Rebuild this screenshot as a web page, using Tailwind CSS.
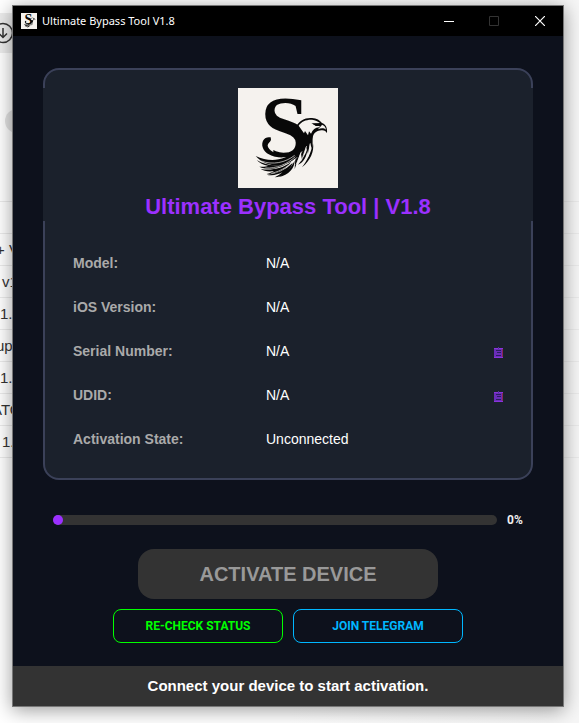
<!DOCTYPE html>
<html lang="en">
<head>
  <meta charset="UTF-8" />
  <meta name="viewport" content="width=device-width, initial-scale=1.0" />
  <title>Ultimate Bypass Tool V1.8</title>
  <script src="https://cdn.jsdelivr.net/npm/@tailwindcss/browser@4"></script>
</head>

<body class="relative min-h-screen overflow-hidden bg-[#fafafa] pt-[5px] pr-[15px] pb-4 pl-3 font-['Liberation_Sans',Arial,sans-serif]">

  <!-- LOGO -->
  <svg class="hidden">
    <symbol id="logo" viewBox="30 24 300 300">
      <rect x="30" y="24" width="300" height="300" fill="#f5f2ee" />
      <text x="97" y="228" font-family="Liberation Serif, serif" font-weight="700" font-size="262" fill="#080808">S</text>
      <!-- curled tail -->
      <path d="M90 166H136V245H90Z" fill="#f5f2ee" />
      <path d="M128 172C110 168 99 184 104 202C110 222 136 234 168 232C198 230 220 218 226 192L214 187C208 212 190 225 168 224C140 222 122 211 119 198C119 188 128 186 129 179Z" fill="#080808" />
      <g fill="#080808">
        <path d="M204 140C214 122 232 112 252 114C266 115 276 121 282 129C292 132 299 142 297 160C294 153 288 150 280 151C268 152 258 158 255 169C252 181 256 193 252 207L246 190L240 222L234 200L222 240L218 215L200 267L202 235C192 245 178 252 160 256C130 258 102 250 83 228C106 239 130 242 152 238C178 233 204 215 211 188C214 170 211 152 204 140Z" />
        <path d="M86 240C112 256 146 262 178 248C160 264 120 273 94 260C108 261 116 259 120 257C106 255 94 249 86 240Z" />
        <path d="M98 267C130 272 162 266 190 246C172 270 142 284 116 282C124 280 132 277 138 273C122 276 108 273 98 267Z" />
        <path d="M116 284C146 282 172 270 194 248C186 272 164 291 140 292C150 287 158 282 163 277C150 284 132 288 116 284Z" />
        <path d="M150 291C172 280 188 264 200 242C200 262 184 286 150 291Z" />
        <path d="M222 262C236 244 248 222 255 190C259 214 248 242 222 262Z" />
        <path d="M210 254C222 240 232 224 238 206C238 228 226 248 210 254Z" />
      </g>
      <path d="M212 137C220 124 236 118 252 119C262 120 270 124 276 129L262 130L253 131L264 138L276 138L273 142C262 143 254 149 249 161L243 154L240 166L231 153L228 160Z" fill="#f5f2ee" />
      <path d="M282 134C289 136 293 141 294 149C288 144 279 144 270 148C274 142 279 139 282 134Z" fill="#f5f2ee" />
      <path d="M250 129L274 133L280 137L264 137Z" fill="#080808" />
      <path d="M100 243C134 256 172 248 200 226M112 264C146 266 178 252 202 230M130 280C160 274 188 254 207 232M204 254L222 214M220 242L236 198M240 230L247 190" fill="none" stroke="#f5f2ee" stroke-width="2" />
    </symbol>
    <symbol id="copy" viewBox="0 0 9 13">
      <path d="M0 3H9V13H0Z" fill="#6a2db8" />
      <path d="M0 3.500H9M0 12.500H9" stroke="#8a34dc" />
      <path d="M2 5.500H7M3 7.500H7M2 10.500H7" stroke="#2c1c60" />
      <path d="M4 2H5V4H4Z" fill="#51309a" />
      <path d="M8 4H9V12H8Z" fill="#8d2854" />
    </symbol>
  </svg>

  <!-- PAGE BEHIND THE WINDOW -->
  <div class="absolute inset-0 overflow-hidden bg-linear-to-r from-white from-50% to-[#f6f6f6] to-95% text-[15px] text-[#333]" aria-hidden="true">
    <div class="mt-[13px] flex h-10 w-1/2 items-center bg-[#ececec]">
      <svg class="-ml-2 size-[22px] shrink-0" viewBox="0 0 22 22" fill="none" stroke="#333" stroke-width="1.500">
        <circle cx="11" cy="11" r="9.500" />
        <path d="M11 6V15M7 11.500L11 15.500L15 11.500" />
      </svg>
    </div>
    <div class="mt-14 ml-[5px] size-6 rounded-full bg-[#e4e4e4]"></div>
    <ul class="mt-[68px] whitespace-nowrap border-t border-[#ebebeb]">
      <li class="h-8 border-b border-[#ebebeb]"></li>
      <li class="h-8 border-b border-[#ebebeb] leading-8"><span class="-ml-1">+ V</span></li>
      <li class="h-8 border-b border-[#ebebeb] pl-0.5 leading-8">v1</li>
      <li class="h-8 border-b border-[#ebebeb] leading-8">1.8</li>
      <li class="h-8 border-b border-[#ebebeb] leading-8"><span class="-ml-1">up</span></li>
      <li class="h-8 border-b border-[#ebebeb] leading-8">1.0</li>
      <li class="h-8 border-b border-[#ebebeb] leading-8"><span class="-ml-2">ATO</span></li>
      <li class="h-8 border-b border-[#ebebeb] pl-0.5 leading-8">1.</li>
    </ul>
  </div>

  <!-- WINDOW -->
  <main class="relative border border-[#777] bg-[#0d111c] shadow-[0_3px_18px_rgba(0,0,0,0.4)]">
    <header class="flex h-[30px] items-center bg-black pl-2 text-white">
      <svg class="size-4"><use href="#logo" /></svg>
      <h1 class="ml-[5px] flex-1 font-['Noto_Sans',sans-serif] text-[11px]">Ultimate Bypass Tool V1.8</h1>
      <button class="flex h-full w-[45px] items-center justify-center" aria-label="Minimize">
        <svg class="size-2.5" viewBox="0 0 10 10" stroke="currentColor"><path d="M0 5.500H10" /></svg>
      </button>
      <button class="flex h-full w-[46px] items-center justify-center text-[#333]" aria-label="Maximize" disabled>
        <svg class="size-2.5" viewBox="0 0 10 10" fill="none" stroke="currentColor"><path d="M.5 .5H9.500V9.500H.5Z" /></svg>
      </button>
      <button class="flex h-full w-[46px] items-center justify-center" aria-label="Close">
        <svg class="size-2.5" viewBox="0 0 10 10" stroke="currentColor" stroke-width="1.200"><path d="M0 0L10 10M10 0L0 10" /></svg>
      </button>
    </header>

    <div class="px-[30px] pt-8 pb-[23px]">
      <!-- DEVICE INFO -->
      <section class="rounded-2xl border-2 border-[#3b4159] bg-[#1b212c] pt-[18px] pb-[17px]">
        <div class="-mx-0.5 flex flex-col items-center bg-[#1b212c]">
          <svg class="size-[100px]"><use href="#logo" /></svg>
          <h2 class="mt-[5px] text-[22px] leading-7 font-bold text-[#9b30ff]">Ultimate Bypass Tool | V1.8</h2>
        </div>

        <dl class="mt-5 px-7 text-sm text-white">
          <div class="flex h-11 items-center">
            <dt class="w-[193px] font-bold text-[#aaa]">Model:</dt>
            <dd class="flex-1">N/A</dd>
          </div>
          <div class="flex h-11 items-center">
            <dt class="w-[193px] font-bold text-[#aaa]">iOS Version:</dt>
            <dd class="flex-1">N/A</dd>
          </div>
          <div class="flex h-11 items-center">
            <dt class="w-[193px] font-bold text-[#aaa]">Serial Number:</dt>
            <dd class="flex flex-1 items-center justify-between">N/A
              <button aria-label="Copy serial number"><svg class="h-[13px] w-[9px]"><use href="#copy" /></svg></button>
            </dd>
          </div>
          <div class="flex h-11 items-center">
            <dt class="w-[193px] font-bold text-[#aaa]">UDID:</dt>
            <dd class="flex flex-1 items-center justify-between">N/A
              <button aria-label="Copy UDID"><svg class="h-[13px] w-[9px]"><use href="#copy" /></svg></button>
            </dd>
          </div>
          <div class="flex h-11 items-center">
            <dt class="w-[193px] font-bold text-[#aaa]">Activation State:</dt>
            <dd class="flex-1">Unconnected</dd>
          </div>
        </dl>
      </section>

      <!-- PROGRESS -->
      <div class="mt-8 flex items-center gap-2.5 px-2.5">
        <div class="h-2.5 flex-1 rounded-full bg-[#333]" role="progressbar" aria-label="Activation progress" aria-valuenow="0" aria-valuemin="0" aria-valuemax="100">
          <div class="size-2.5 rounded-full bg-[#9b30ff]"></div>
        </div>
        <span class="w-4 font-[Roboto,sans-serif] text-xs font-bold text-[#eee]">0%</span>
      </div>

      <!-- ACTIONS -->
      <div class="mt-[21px] flex flex-col items-center gap-2.5">
        <button class="h-[50px] w-[300px] rounded-2xl bg-[#333] text-xl font-bold text-[#999]" disabled>ACTIVATE DEVICE</button>
        <div class="flex gap-2.5">
          <button class="h-[34px] w-[170px] rounded-lg border border-[#00ff00] font-[Roboto,sans-serif] text-xs font-bold text-[#00ff00]">RE-CHECK STATUS</button>
          <button class="h-[34px] w-[170px] rounded-lg border border-[#00b7ff] font-[Roboto,sans-serif] text-xs font-bold text-[#00b7ff]">JOIN TELEGRAM</button>
        </div>
      </div>
    </div>

    <footer class="flex h-10 items-center justify-center bg-[#333] text-[15px] font-bold text-white">Connect your device to start activation.</footer>
  </main>

</body>
</html>
